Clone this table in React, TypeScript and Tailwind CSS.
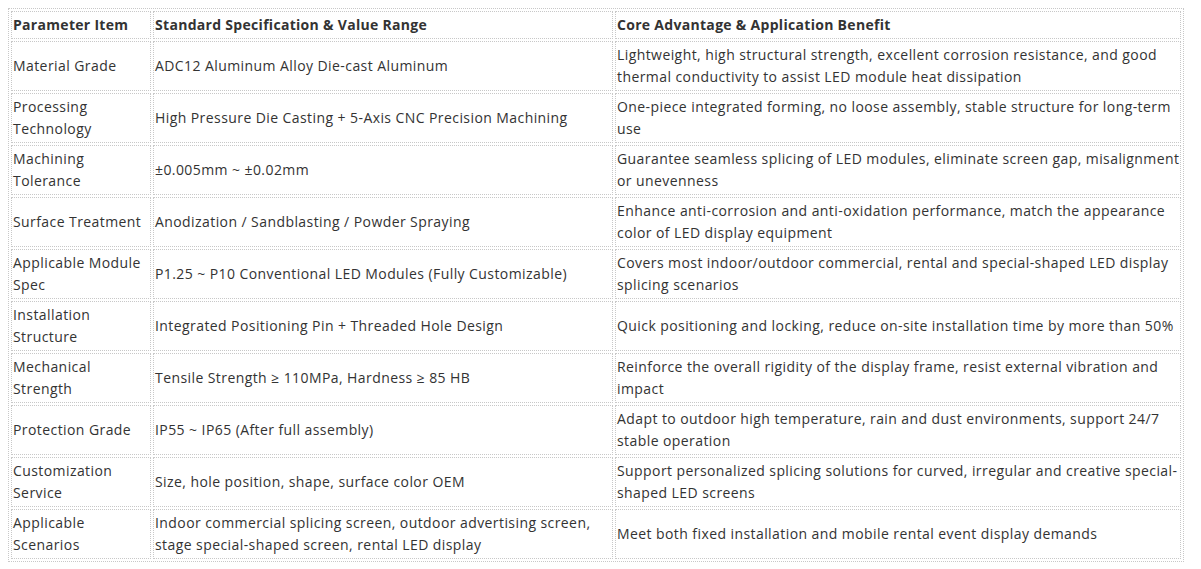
const rows: [string[], string[], string[]][] = [
  [["Material Grade"], ["ADC12 Aluminum Alloy Die-cast Aluminum"], ["Lightweight, high structural strength, excellent corrosion resistance, and good", "thermal conductivity to assist LED module heat dissipation"]],
  [["Processing", "Technology"], ["High Pressure Die Casting + 5-Axis CNC Precision Machining"], ["One-piece integrated forming, no loose assembly, stable structure for long-term", "use"]],
  [["Machining", "Tolerance"], ["±0.005mm ~ ±0.02mm"], ["Guarantee seamless splicing of LED modules, eliminate screen gap, misalignment", "or unevenness"]],
  [["Surface Treatment"], ["Anodization / Sandblasting / Powder Spraying"], ["Enhance anti-corrosion and anti-oxidation performance, match the appearance", "color of LED display equipment"]],
  [["Applicable Module", "Spec"], ["P1.25 ~ P10 Conventional LED Modules (Fully Customizable)"], ["Covers most indoor/outdoor commercial, rental and special-shaped LED display", "splicing scenarios"]],
  [["Installation", "Structure"], ["Integrated Positioning Pin + Threaded Hole Design"], ["Quick positioning and locking, reduce on-site installation time by more than 50%"]],
  [["Mechanical", "Strength"], ["Tensile Strength ≥ 110MPa, Hardness ≥ 85 HB"], ["Reinforce the overall rigidity of the display frame, resist external vibration and", "impact"]],
  [["Protection Grade"], ["IP55 ~ IP65 (After full assembly)"], ["Adapt to outdoor high temperature, rain and dust environments, support 24/7", "stable operation"]],
  [["Customization", "Service"], ["Size, hole position, shape, surface color OEM"], ["Support personalized splicing solutions for curved, irregular and creative special-", "shaped LED screens"]],
  [["Applicable", "Scenarios"], ["Indoor commercial splicing screen, outdoor advertising screen,", "stage special-shaped screen, rental LED display"], ["Meet both fixed installation and mobile rental event display demands"]],
];

function Lines({ lines }: { lines: string[] }) {
  return (
    <>
      {lines.map((line, i) => (
        <span key={i} className="block whitespace-nowrap">
          {line}
        </span>
      ))}
    </>
  );
}

const cell = "border border-dotted border-[#c8c8c8] px-[1px] py-[2px] align-middle text-left";

export default function App() {
  return (
    <div className="min-h-screen bg-white p-2 font-['Open_Sans',sans-serif] text-[14px] leading-[22px] text-[#333]">
      <table className="w-[1176px] table-fixed border-separate border-spacing-[2px] border border-dotted border-[#c8c8c8]">
        <colgroup>
          <col className="w-[140px]" />
          <col className="w-[460px]" />
          <col className="w-[566px]" />
        </colgroup>
        <thead>
          <tr className="h-[28px]">
            <th className={`${cell} font-bold tracking-[0.3px]`}>Parameter Item</th>
            <th className={`${cell} font-bold tracking-[0.3px]`}>Standard Specification &amp; Value Range</th>
            <th className={`${cell} font-bold tracking-[0.3px]`}>Core Advantage &amp; Application Benefit</th>
          </tr>
        </thead>
        <tbody className="tracking-[0.42px]">
          {rows.map(([a, b, c], i) => (
            <tr key={i} className="h-[50px]">
              <td className={cell}>
                <Lines lines={a} />
              </td>
              <td className={cell}>
                <Lines lines={b} />
              </td>
              <td className={cell}>
                <Lines lines={c} />
              </td>
            </tr>
          ))}
        </tbody>
      </table>
    </div>
  );
}
